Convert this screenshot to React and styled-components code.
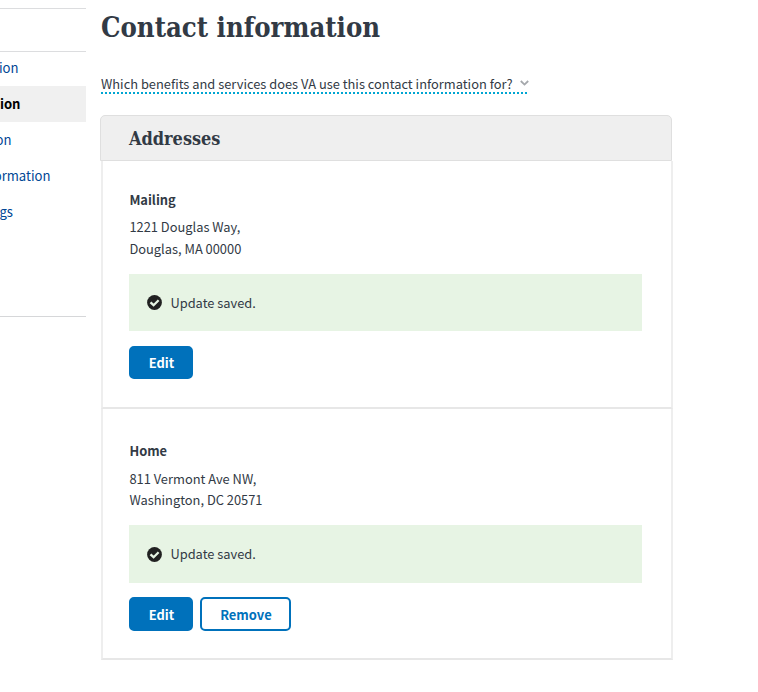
import React from 'react';
import styled, { createGlobalStyle } from 'styled-components';

const Global = createGlobalStyle`
  * { box-sizing: border-box; }
  body {
    margin: 0;
    background: #fff;
    color: #323a45;
    font: 12.87px/21.6px "Noto Sans CJK SC", "Source Sans Pro", sans-serif;
    overflow: hidden;
  }
  h1, h2, h3, p { margin: 0; }
`;

const Page = styled.div`
  display: flex;
  width: 758px;
  height: 692px;
  overflow: hidden;
`;

const Sidebar = styled.nav`
  width: 86px;
  height: 317px;
  margin-right: 14px;
  padding-top: 8px;
  border-bottom: 1px solid #d6d7d9;
`;

const SidebarTitle = styled.div`
  height: 44px;
  border: solid #dcdddf;
  border-width: 1px 0;
  margin-bottom: -2px;
`;

const SidebarRow = styled.div`
  height: 35.9px;
  background: ${(p) => (p.$active ? '#f0f0f0' : 'transparent')};
`;

const SidebarLink = styled.a`
  display: flex;
  justify-content: flex-end;
  width: ${(p) => p.$end}px;
  line-height: 36px;
  font-size: 13.1px;
  white-space: nowrap;
  color: ${(p) => (p.$active ? '#000' : '#004795')};
  font-weight: ${(p) => (p.$active ? 700 : 400)};
`;

const Main = styled.main`
  width: 573px;
`;

const Title = styled.h1`
  height: 74px;
  padding-left: 1px;
  font: 700 27.5px/54px "DejaVu Serif Condensed", "DejaVu Serif", serif;
  white-space: nowrap;
  transform: scaleX(${(p) => p.$stretch});
  transform-origin: 0 0;
`;

const Disclosure = styled.div`
  display: flex;
  align-items: center;
  justify-content: space-between;
  width: 426px;
  height: 20px;
  margin-left: 1px;
  border-bottom: 2px dotted #00a6d2;
  line-height: 20px;
  white-space: nowrap;
`;

const Question = styled.span`
  padding-top: 1px;
`;

const Chevron = styled.svg`
  flex: none;
  width: 9px;
  height: 6px;
  margin-right: -2px;
`;

const CardHeader = styled.header`
  width: 572px;
  height: 46px;
  margin-top: 21px;
  padding-left: 28px;
  background: #efefef;
  border: 1.5px solid #dfdfdf;
  border-radius: 5px 5px 0 0;
`;

const CardTitle = styled.h2`
  font: 700 18.5px/45px "DejaVu Serif Condensed", "DejaVu Serif", serif;
  white-space: nowrap;
  transform: scaleX(${(p) => p.$stretch});
  transform-origin: 0 0;
`;

const Section = styled.section`
  width: 572px;
  height: ${(p) => p.$height}px;
  margin-left: 1px;
  padding: ${(p) => p.$top}px 29px 0 26.4px;
  border: solid #eeeeee;
  border-width: 0 2px 2px;
  border-bottom-color: #e7e7e7;
`;

const Label = styled.h3`
  height: 27.4px;
  font-size: 12.87px;
  line-height: 22px;
`;

const Address = styled.p`
  height: 57.6px;
`;

const AddressLine = styled.span`
  display: block;
  height: 21.6px;
  line-height: 21px;
`;

const Alert = styled.div`
  display: flex;
  align-items: center;
  gap: 8px;
  width: 512.6px;
  height: 57.4px;
  padding-left: 18px;
  background: #e7f4e4;
`;

const Check = styled.svg`
  width: 15px;
  height: 15px;
`;

const Actions = styled.div`
  display: flex;
  gap: 7px;
  margin-top: 14.4px;
`;

const Button = styled.button`
  width: ${(p) => p.$width}px;
  height: 33.4px;
  padding: 2px 0 0;
  border: 2px solid #0071bb;
  border-radius: 5px;
  background: ${(p) => (p.$secondary ? '#fff' : '#0071bb')};
  color: ${(p) => (p.$secondary ? '#0071bb' : '#fff')};
  font: 700 12.95px/20px "Noto Sans CJK SC", sans-serif;
`;

const links = [
  { text: 'ion', end: 18.5 },
  { text: 'ion', end: 20.5, active: true },
  { text: 'on', end: 11.5 },
  { text: 'ormation', end: 50.5 },
  { text: 'gs', end: 13 },
];

function SavedAlert() {
  return (
    <Alert role="status">
      <Check viewBox="0 0 15 15" aria-hidden="true">
        <circle cx="7.5" cy="7.5" r="7.4" fill="#212121" />
        <path d="M3.5 7.3 L6.6 10.2 L11.6 5.2" fill="none" stroke="#e7f4e4" strokeWidth="2.3" />
      </Check>
      <span>Update saved.</span>
    </Alert>
  );
}

export default function App() {
  return (
    <Page>
      <Global />
      <Sidebar>
        <SidebarTitle />
        {links.map((l, i) => (
          <SidebarRow key={i} $active={l.active}>
            <SidebarLink $end={l.end} $active={l.active}>{l.text}</SidebarLink>
          </SidebarRow>
        ))}
      </Sidebar>
      <Main>
        <Title $stretch={0.99}>Contact information</Title>
        <Disclosure>
          <Question>Which benefits and services does VA use this contact information for?</Question>
          <Chevron viewBox="0 0 9 6" aria-hidden="true">
            <path d="M0.8 1 L4.5 4.6 L8.2 1" fill="none" stroke="#a5a8ac" strokeWidth="1.8" />
          </Chevron>
        </Disclosure>
        <CardHeader>
          <CardTitle $stretch={0.97}>Addresses</CardTitle>
        </CardHeader>
        <Section $height={248} $top={28}>
          <Label>Mailing</Label>
          <Address>
            <AddressLine>1221 Douglas Way,</AddressLine>
            <AddressLine>Douglas, MA 00000</AddressLine>
          </Address>
          <SavedAlert />
          <Actions>
            <Button $width={64}>Edit</Button>
          </Actions>
        </Section>
        <Section $height={251} $top={31.4}>
          <Label>Home</Label>
          <Address>
            <AddressLine>811 Vermont Ave NW,</AddressLine>
            <AddressLine>Washington, DC 20571</AddressLine>
          </Address>
          <SavedAlert />
          <Actions>
            <Button $width={64}>Edit</Button>
            <Button $width={91} $secondary>Remove</Button>
          </Actions>
        </Section>
      </Main>
    </Page>
  );
}
